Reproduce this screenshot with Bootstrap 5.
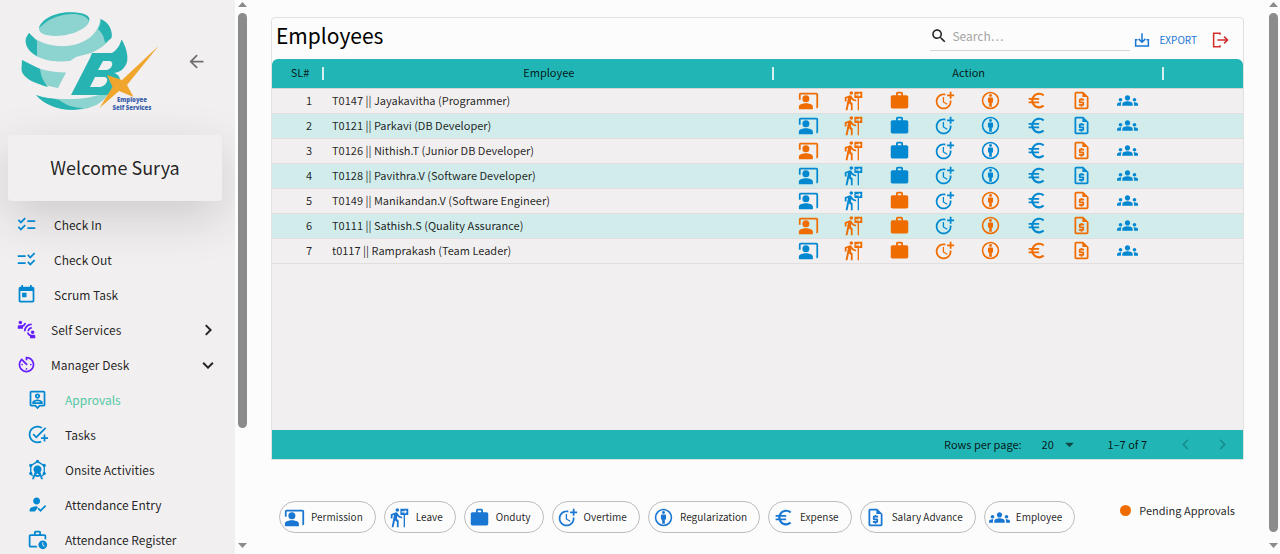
<!DOCTYPE html>
<html lang="en">
<head>
<meta charset="utf-8">
<meta name="viewport" content="width=device-width, initial-scale=1">
<title>Employees – Approvals</title>
<link href="https://cdn.jsdelivr.net/npm/bootstrap@5.3.0/dist/css/bootstrap.min.css" rel="stylesheet">
<style>
  :root { --teal: #22b5b5; --blue: #0288d1; --chip-blue: #1976d2; --orange: #ef6c00; --violet: #651fff; --panel: #f2eff0; }
  body { font-family: "Noto Sans CJK JP", "Noto Sans", sans-serif; font-size: 12px; line-height: 18px; color: rgba(0,0,0,.87); background: #fcfcfc; }
  .ico { width: 21px; height: 21px; fill: currentColor; display: block; flex: none; }
  .ico-sm { width: 18px; height: 18px; }
  .plain { background: none; border: 0; padding: 0; color: inherit; }

  .sidebar { width: 235px; background: var(--panel); overflow: hidden; flex: none; }
  .brand-row { height: 135px; padding: 9px 28px 0 18px; }
  .back { color: #6f6f6f; margin-bottom: 22px; }
  .welcome { margin: 0 13px 6px 8px; height: 66px; padding-bottom: 3px; border-radius: 4px; background: var(--panel); font-size: 18px; }
  .menu a { display: flex; align-items: center; height: 35px; padding: 0 18px 0 16px; color: rgba(0,0,0,.87); text-decoration: none; white-space: nowrap; }
  .menu .ico { color: var(--blue); margin-right: 17px; }
  .menu .group-link .ico { color: var(--violet); margin-right: 14px; }
  .menu .group-link .chev { color: #222; margin: 0 0 0 auto; }
  .menu .sub-link { padding-left: 27px; }
  .menu .current { color: #52c9a5; }

  .scroll-track { width: 14px; padding: 2px 0 6px; background: #fcfcfc; flex: none; color: #8b8b8b; }
  .scroll-track svg { width: 9px; height: 5px; fill: currentColor; display: block; }
  .scroll-thumb { width: 9px; border-radius: 5px; background: #8b8b8b; margin-top: 6px; }
  .thumb-menu { height: 76%; }
  .thumb-page { height: 95%; }

  .content-area { padding: 17px 22px 21px 22px; min-width: 0; }
  .grid-panel { border: 1px solid #e0e0e0; border-radius: 4px 4px 0 0; margin-bottom: 41px; background: #fcfcfc; }
  .grid-head { height: 41px; }
  .grid-title { font-size: 21px; line-height: 34px; margin: 0 0 0 4px; color: #000; }
  .search-box { width: 200px; height: 33px; padding-top: 3px; border-bottom: 1px solid #d4d4d4; margin-right: 3px; }
  .search-box input { border: 0; outline: 0; background: none; font-size: 12px; width: 100%; padding: 0; line-height: 18px; }
  .search-box input::placeholder { color: #a5a5a5; opacity: 1; }
  .export-btn { color: var(--chip-blue); font-size: 10px; margin-top: 13px; }
  .exit-btn { color: #d32f2f; margin: 13px 14px 0 14px; }
  .grid-body { background: var(--panel); border-radius: 6px 6px 0 0; overflow: hidden; }
  .emp-table { width: 100%; table-layout: fixed; border-collapse: collapse; font-size: 11px; }
  .emp-table th { height: 29px; padding: 0 0 2px; text-align: center; font-weight: 400; line-height: 18px;
    background: linear-gradient(#d5eeee,#d5eeee) right center / 2px 13px no-repeat var(--teal); border-bottom: 1px solid #d5d5d5; }
  .emp-table th:first-child { padding-left: 4px; }
  .emp-table th:last-child { background: var(--teal); }
  .emp-table td { height: 25px; padding: 0; border-bottom: 1px solid #e0dedf; line-height: 18px; white-space: nowrap; overflow: hidden; }
  .emp-table tbody tr:nth-child(even) { background: #d1ecea; }
  .emp-table .num { text-align: right; padding: 0 12px 2px 0; }
  .emp-table .who { padding: 0 0 2px 8px; }
  .acts { display: grid; grid-template-columns: repeat(8, 1fr); justify-items: center; padding: 0 14px 0 12px; }
  .ok { color: var(--blue); }
  .pending { color: var(--orange); }
  .grid-foot { height: 29px; background: var(--teal); font-size: 11px; padding: 0 10px 1px 0; }
  .grid-foot select { appearance: none; background: none; border: 0; padding: 0; font-size: 11px; color: inherit; }
  .grid-foot .caret-ico { color: rgba(0,0,0,.6); }
  .page-btn { color: #168f8f; }

  .key-chip { display: flex; align-items: center; height: 32px; border: 1px solid #bdbdbd; border-radius: 16px; padding: 0 12px 0 4px; gap: 6px; font-size: 10px; white-space: nowrap; background: none; color: rgba(0,0,0,.87); }
  .key-chip .ico { color: var(--chip-blue); }
  .dot { width: 11px; height: 11px; border-radius: 50%; background: var(--orange); }
  .pending-key { font-size: 11px; padding-right: 9px; white-space: nowrap; }
</style>
</head>
<body>
<svg class="d-none" aria-hidden="true">
  <symbol id="i-checkin" viewBox="0 0 24 24"><path d="M22 7h-9v2h9V7zm0 8h-9v2h9v-2zM5.54 11 2 7.46l1.41-1.41 2.12 2.12 4.24-4.24 1.41 1.41L5.54 11zm0 8L2 15.46l1.41-1.41 2.12 2.12 4.24-4.24 1.41 1.41L5.54 19z"/></symbol>
  <symbol id="i-checkout" viewBox="0 0 24 24"><path d="M11 7H2v2h9V7zm0 8H2v2h9v-2zm5.34-4-3.54-3.54 1.41-1.41 2.12 2.12 4.24-4.24L22 5.34 16.34 11zm0 8-3.54-3.54 1.41-1.41 2.12 2.12 4.24-4.24L22 13.34 16.34 19z"/></symbol>
  <symbol id="i-today" viewBox="0 0 24 24"><path d="M19 3h-1V1h-2v2H8V1H6v2H5c-1.11 0-1.99.9-1.99 2L3 19c0 1.1.89 2 2 2h14c1.1 0 2-.9 2-2V5c0-1.1-.9-2-2-2zm0 16H5V8h14v11zM7 10h5v5H7z"/></symbol>
  <symbol id="i-connect" viewBox="0 0 24 24"><path d="M11 14H9c0-4.97 4.03-9 9-9v2c-3.87 0-7 3.13-7 7zm7-3V9c-2.76 0-5 2.24-5 5h2c0-1.66 1.34-3 3-3zM7 4c0-1.11-.89-2-2-2s-2 .89-2 2 .89 2 2 2 2-.89 2-2zm4.45.5h-2C9.21 5.92 7.99 7 6.5 7h-3C2.67 7 2 7.67 2 8.5V11h6V8.74c1.86-.59 3.25-2.23 3.45-4.24zM19 17c1.11 0 2-.89 2-2s-.89-2-2-2-2 .89-2 2 .89 2 2 2zm1.5 1h-3c-1.49 0-2.71-1.08-2.95-2.5h-2c.2 2.01 1.59 3.65 3.45 4.24V22h6v-2.5c0-.83-.67-1.5-1.5-1.5z"/></symbol>
  <symbol id="i-timer" viewBox="0 0 24 24"><path d="M11 17c0 .55.45 1 1 1s1-.45 1-1-.45-1-1-1-1 .45-1 1zm0-14v4h2V5.08c3.39.49 6 3.39 6 6.92 0 3.87-3.13 7-7 7s-7-3.13-7-7c0-1.68.59-3.22 1.58-4.42L12 13l1.41-1.41-6.8-6.8v.02C4.42 6.45 3 9.05 3 12c0 4.97 4.02 9 9 9 4.97 0 9-4.03 9-9s-4.03-9-9-9h-1zm7 9c0-.55-.45-1-1-1s-1 .45-1 1 .45 1 1 1 1-.45 1-1zM6 12c0 .55.45 1 1 1s1-.45 1-1-.45-1-1-1-1 .45-1 1z"/></symbol>
  <symbol id="i-approve" viewBox="0 0 24 24"><path d="M19 2H5c-1.11 0-2 .9-2 2v14c0 1.1.89 2 2 2h4l3 3 3-3h4c1.1 0 2-.9 2-2V4c0-1.1-.9-2-2-2zm0 16h-4.83l-.59.59L12 20.17l-1.59-1.59-.58-.58H5V4h14v14zm-7-7c1.65 0 3-1.35 3-3s-1.35-3-3-3-3 1.35-3 3 1.35 3 3 3zm0-4c.55 0 1 .45 1 1s-.45 1-1 1-1-.45-1-1 .45-1 1-1zm6 8.58c0-2.5-3.97-3.58-6-3.58s-6 1.08-6 3.58V17h12v-1.42zM8.48 15c.74-.51 2.23-1 3.52-1s2.78.49 3.52 1H8.48z"/></symbol>
  <symbol id="i-task" viewBox="0 0 24 24"><path d="M22 5.18 10.59 16.6l-4.24-4.24 1.41-1.41 2.83 2.83 10-10L22 5.18zM12 20c-4.41 0-8-3.59-8-8s3.59-8 8-8c1.57 0 3.04.46 4.28 1.25l1.45-1.45C16.1 2.67 14.13 2 12 2 6.48 2 2 6.48 2 12s4.48 10 10 10c1.73 0 3.36-.44 4.78-1.22l-1.5-1.5c-1 .46-2.11.72-3.28.72zm7-5h-3v2h3v3h2v-3h3v-2h-3v-3h-2v3z"/></symbol>
  <symbol id="i-wheel" viewBox="0 0 24 24"><path fill="none" stroke="currentColor" stroke-width="1.5" d="M6.500 19.500 4.300 16.500V7.500L12 3l7.700 4.500v9l-2.200 3"/><circle cx="12" cy="2.700" r="1.800"/><circle cx="4.300" cy="7.300" r="1.800"/><circle cx="19.700" cy="7.300" r="1.800"/><circle cx="4.300" cy="16.500" r="1.800"/><circle cx="19.700" cy="16.500" r="1.800"/><path d="M12 7a4.700 4.700 0 0 1 3.300 8l3 8h-2.200l-1.200-3.200a6 6 0 0 1-5.800 0L7.900 23H5.700l3-8A4.700 4.700 0 0 1 12 7zm0 9.400-1.700 1.900h3.400z"/></symbol>
  <symbol id="i-entry" viewBox="0 0 24 24"><path d="m9 20 3.500-4.500c-.6-.9-1-1.300-1.500-1.500-2.670 0-8 1.340-8 4v2h6zm2-8c2.210 0 4-1.790 4-4s-1.790-4-4-4-4 1.790-4 4 1.790 4 4 4zM15.470 20.500 12 17l1.400-1.410 2.070 2.080 5.130-5.170 1.400 1.410z"/></symbol>
  <symbol id="i-register" viewBox="0 0 24 24"><path d="M4 8h16v3.300c.7.200 1.400.5 2 .9V8c0-1.110-.890-2-2-2h-4V4c0-1.110-.890-2-2-2h-4c-1.110 0-2 .890-2 2v2H4c-1.110 0-2 .890-2 2v11c0 1.110.890 2 2 2h7.700c-.3-.6-.5-1.300-.6-2H4V8zm6-4h4v2h-4V4z"/><path fill-rule="evenodd" d="M18 13a5 5 0 1 0 0 10 5 5 0 0 0 0-10zm1.650 7.350L17.500 18.200V15h1v2.790l1.850 1.850-.7.710z"/></symbol>
  <symbol id="i-permission" viewBox="0 0 24 24"><path d="M21 3H3c-1.100 0-2 .9-2 2v6h2V5h18v16c1.100 0 2-.9 2-2V5c0-1.100-.9-2-2-2z"/><circle cx="9" cy="10" r="4"/><path d="M15.390 16.560C13.710 15.700 11.530 15 9 15s-4.710.7-6.390 1.560C1.610 17.070 1 18.100 1 19.220V22h16v-2.780c0-1.120-.610-2.150-1.610-2.660z"/></symbol>
  <symbol id="i-leave" viewBox="0 0 24 24"><path d="M9.500 5.500c1.100 0 2-.9 2-2s-.9-2-2-2-2 .9-2 2 .9 2 2 2zM5.750 8.900 3 23h2.100l1.750-8L9 17v6h2v-7.550L8.950 13.400l.6-3C10.850 12 12.800 13 15 13v-2c-1.850 0-3.450-1-4.350-2.450l-.95-1.600C9.350 6.350 8.700 6 8 6c-.250 0-.5.050-.750.150L2 8.300V13h2V9.650l1.750-.75M13 2v7h3.750v14h1.500V9H22V2h-9zm5.010 6V6.250H14.500v-1.500h3.510V3l2.490 2.500L18.010 8z"/></symbol>
  <symbol id="i-onduty" viewBox="0 0 24 24"><path d="M20 6h-4V4c0-1.110-.890-2-2-2h-4c-1.110 0-2 .890-2 2v2H4c-1.110 0-1.990.890-1.990 2L2 19c0 1.110.890 2 2 2h16c1.110 0 2-.890 2-2V8c0-1.110-.890-2-2-2zm-6 0h-4V4h4v2z"/></symbol>
  <symbol id="i-overtime" viewBox="0 0 24 24"><path d="M10 8v6l4.700 2.900.8-1.200-4-2.400V8zM17.920 12c.050.330.080.660.080 1 0 3.900-3.100 7-7 7s-7-3.100-7-7 3.100-7 7-7c.7 0 1.370.1 2 .290V4.230c-.640-.150-1.310-.230-2-.230-5 0-9 4-9 9s4 9 9 9 9-4 9-9c0-.340-.020-.670-.060-1h-2.020zM20 5V2h-2v3h-3v2h3v3h2V7h3V5z"/></symbol>
  <symbol id="i-regular" viewBox="0 0 24 24"><circle cx="12" cy="12" r="9.100" fill="none" stroke="currentColor" stroke-width="1.800"/><circle cx="12" cy="6.300" r="1.600"/><path d="M10.300 8.500h3.400c.7 0 1.200.5 1.200 1.200v4.500h-1.400V19h-3v-4.800H9.100V9.700c0-.7.500-1.200 1.200-1.200z"/></symbol>
  <symbol id="i-expense" viewBox="0 0 24 24"><path d="M15 18.500c-2.510 0-4.680-1.420-5.760-3.500H15v-2H8.580c-.050-.330-.080-.660-.080-1s.030-.670.080-1H15V9H9.240C10.320 6.920 12.500 5.500 15 5.500c1.610 0 3.090.590 4.230 1.570L21 5.300C19.410 3.870 17.300 3 15 3c-3.920 0-7.240 2.510-8.480 6H3v2h3.060c-.040.330-.060.660-.060 1s.020.670.060 1H3v2h3.520c1.240 3.490 4.560 6 8.480 6 2.310 0 4.410-.870 6-2.300l-1.780-1.770c-1.130.980-2.600 1.570-4.220 1.570z"/></symbol>
  <symbol id="i-salary" viewBox="0 0 24 24"><path d="M14 2H6c-1.100 0-1.990.9-1.990 2L4 20c0 1.100.890 2 1.990 2H18c1.100 0 2-.9 2-2V8l-6-6zM6 20V4h7v4h5v12H6zm5-1h2v-1h1c.550 0 1-.450 1-1v-3c0-.550-.450-1-1-1h-3v-1h4v-2h-2V9h-2v1h-1c-.550 0-1 .450-1 1v3c0 .550.450 1 1 1h3v1H9v2h2v1z"/></symbol>
  <symbol id="i-employee" viewBox="0 0 24 24"><path d="M12 12.750c1.630 0 3.070.390 4.240.9 1.080.480 1.760 1.560 1.760 2.730V18H6v-1.610c0-1.180.680-2.260 1.760-2.730 1.170-.520 2.610-.910 4.240-.910zM4 13c1.100 0 2-.9 2-2s-.9-2-2-2-2 .9-2 2 .9 2 2 2zm1.130 1.100c-.370-.060-.740-.1-1.130-.1-.990 0-1.930.210-2.780.580C.480 14.900 0 15.620 0 16.430V18h4.500v-1.610c0-.830.230-1.610.630-2.290zM20 13c1.100 0 2-.9 2-2s-.9-2-2-2-2 .9-2 2 .9 2 2 2zm4 3.430c0-.810-.480-1.530-1.220-1.850-.850-.370-1.790-.580-2.780-.580-.390 0-.760.040-1.130.1.400.680.630 1.460.630 2.290V18H24v-1.570zM12 6c1.660 0 3 1.340 3 3s-1.340 3-3 3-3-1.340-3-3 1.340-3 3-3z"/></symbol>
  <symbol id="i-search" viewBox="0 0 24 24"><path d="M15.500 14h-.790l-.280-.270C15.410 12.590 16 11.110 16 9.500 16 5.910 13.090 3 9.500 3S3 5.910 3 9.500 5.910 16 9.500 16c1.610 0 3.090-.590 4.230-1.570l.270.280v.790l5 4.990L20.490 19l-4.990-5zm-6 0C7.010 14 5 11.990 5 9.500S7.010 5 9.500 5 14 7.010 14 9.500 11.990 14 9.500 14z"/></symbol>
  <symbol id="i-back" viewBox="0 0 24 24"><path d="M20 11H7.830l5.590-5.590L12 4l-8 8 8 8 1.410-1.410L7.830 13H20v-2z"/></symbol>
  <symbol id="i-right" viewBox="0 0 24 24"><path d="M10 6 8.590 7.410 13.170 12l-4.580 4.590L10 18l6-6z"/></symbol>
  <symbol id="i-left" viewBox="0 0 24 24"><path d="M15.410 7.410 14 6l-6 6 6 6 1.410-1.410L10.830 12z"/></symbol>
  <symbol id="i-open" viewBox="0 0 24 24"><path fill="none" stroke="currentColor" stroke-width="2.600" d="m9 5.500 6.500 6.500L9 18.500"/></symbol>
  <symbol id="i-down" viewBox="0 0 24 24"><path fill="none" stroke="currentColor" stroke-width="2.600" d="m5.500 9 6.500 6.500L18.500 9"/></symbol>
  <symbol id="i-caret" viewBox="0 0 24 24"><path d="m7 10 5 5 5-5z"/></symbol>
  <symbol id="i-save" viewBox="0 0 24 24"><path fill="none" stroke="currentColor" stroke-width="2" d="M6 11.500H3.500V20h17v-8.500H18M12 3v12M7.500 10.500 12 15l4.500-4.500"/></symbol>
  <symbol id="i-exit" viewBox="0 0 24 24"><path fill="none" stroke="currentColor" stroke-width="2.100" d="M12 5V3H3.500v18H12v-2M8.500 12H21M17.500 7.500 22 12l-4.500 4.500"/></symbol>
</svg>

<div class="d-flex vh-100 overflow-hidden">
  <aside class="sidebar">
    <div class="brand-row d-flex justify-content-between align-items-center">
      <svg class="align-self-start" width="142" height="106" viewBox="18 9 142 106" role="img" aria-label="TBX Employee Self Services">
        <g fill="#8dd3cf">
          <path d="M39 28C41 20 53 13 67 12.500C81 12 90 15 89.500 20C89 27 76 34 62 35.500C48 37 38 34 39 28Z"/>
          <path d="M29 33C36 42 51 47 67 46C85 44 98 35 100.500 19C108 22 112 29 111.500 37C107 44 100 49 91 53L76 57L70 61C52 63 33 59 27 47C25 42 26 37 29 33Z"/>
          <path d="M22 60C33 68 47 72 66 72.500L58 88C42 85 27 80 22 70Z"/>
          <path d="M36 95C47 99 57 99 73 99C88 99 99 94 108 94C104 102 93 109 76 110C60 111 45 105 36 95Z"/>
        </g>
        <g fill="#26b3b1">
          <path d="M39 28C42 19 55 12.500 70 12.300C84 12 91 16 89 21C86 13 69 12 56 17C47 20 43 25 39 28Z"/>
          <path d="M29 33L37 41L37 56C29 52 24 44 26 38Z"/>
          <path d="M100.500 19C109 22 113 31 111.500 38L105 43C104 36 102 33 98 29C100 26 101 23 100.500 19Z"/>
          <path d="M22 60L40 69C41 76 43 81 48 87C34 83 22 78 21.500 69Z"/>
          <path d="M36 95C46 99 54 98 59 100C66 105 73 108 84 108C67 113 46 107 36 95Z"/>
        </g>
        <path fill="#26b3b1" fill-rule="evenodd" d="M92 53H112C117 50 120 45 121.500 39.500C126 46 128.500 56 127 62C125 68 121 72 114 73C120 75 121 79 119 85C117 91 112 95 105 95H71L90 58ZM103 61L98 70H106C112 70 115 61 109 61ZM95 77L90 87H99C107 87 110 77 104 77Z"/>
        <path fill="#f0a62c" d="M158.500 46L127 85L133.500 97L119 91L99.500 108L112.500 87L107 75L122 80Z"/>
        <text x="132" y="102" text-anchor="middle" font-family="Open Sans" font-size="6" font-weight="800" fill="#3b62ad">Employee</text>
        <text x="132" y="110" text-anchor="middle" font-family="Open Sans" font-size="6" font-weight="800" fill="#3b62ad">Self Services</text>
      </svg>
      <button type="button" class="plain back" aria-label="Collapse menu"><svg class="ico"><use href="#i-back"/></svg></button>
    </div>
    <div class="welcome shadow-lg d-flex align-items-center justify-content-center">Welcome Surya</div>
    <nav class="menu position-relative" aria-label="Main">
      <a href="#"><svg class="ico"><use href="#i-checkin"/></svg>Check In</a>
      <a href="#"><svg class="ico"><use href="#i-checkout"/></svg>Check Out</a>
      <a href="#"><svg class="ico"><use href="#i-today"/></svg>Scrum Task</a>
      <a href="#" class="group-link"><svg class="ico"><use href="#i-connect"/></svg>Self Services<svg class="ico ico-sm chev"><use href="#i-open"/></svg></a>
      <a href="#" class="group-link"><svg class="ico"><use href="#i-timer"/></svg>Manager Desk<svg class="ico ico-sm chev"><use href="#i-down"/></svg></a>
      <a href="#" class="sub-link current"><svg class="ico"><use href="#i-approve"/></svg>Approvals</a>
      <a href="#" class="sub-link"><svg class="ico"><use href="#i-task"/></svg>Tasks</a>
      <a href="#" class="sub-link"><svg class="ico"><use href="#i-wheel"/></svg>Onsite Activities</a>
      <a href="#" class="sub-link"><svg class="ico"><use href="#i-entry"/></svg>Attendance Entry</a>
      <a href="#" class="sub-link"><svg class="ico"><use href="#i-register"/></svg>Attendance Register</a>
    </nav>
  </aside>
  <div class="scroll-track d-flex flex-column align-items-center" aria-hidden="true">
    <svg viewBox="0 0 9 5"><path d="M0 5 4.500 0 9 5z"/></svg>
    <div class="scroll-thumb thumb-menu"></div>
    <svg viewBox="0 0 9 5" class="mt-auto"><path d="M0 0h9L4.500 5z"/></svg>
  </div>

  <main class="content-area flex-grow-1 d-flex flex-column">
    <section class="grid-panel flex-grow-1 d-flex flex-column">
      <header class="grid-head d-flex align-items-start">
        <h1 class="grid-title fw-normal me-auto">Employees</h1>
        <label class="search-box d-flex align-items-center gap-1">
          <svg class="ico ico-sm"><use href="#i-search"/></svg>
          <input type="search" placeholder="Search…" aria-label="Search">
        </label>
        <button type="button" class="plain export-btn d-flex align-items-center gap-2"><svg class="ico ico-sm"><use href="#i-save"/></svg>EXPORT</button>
        <button type="button" class="plain exit-btn" aria-label="Exit"><svg class="ico ico-sm"><use href="#i-exit"/></svg></button>
      </header>
      <div class="grid-body flex-grow-1">
        <table class="emp-table">
          <colgroup><col style="width:52px"><col style="width:46.3%"><col style="width:40.2%"><col></colgroup>
          <thead><tr><th scope="col">SL#</th><th scope="col">Employee</th><th scope="col">Action</th><th aria-label="More"></th></tr></thead>
          <tbody id="rows"></tbody>
        </table>
      </div>
      <footer class="grid-foot d-flex align-items-center justify-content-end">
        <label for="per-page" class="me-3">Rows per page:</label>
        <span class="d-flex align-items-center ms-1">
          <select id="per-page"><option>20</option><option>50</option></select>
          <svg class="ico caret-ico ms-1"><use href="#i-caret"/></svg>
        </span>
        <span class="mx-4 px-1">1–7 of 7</span>
        <button type="button" class="plain page-btn me-3" aria-label="Previous page" disabled><svg class="ico"><use href="#i-left"/></svg></button>
        <button type="button" class="plain page-btn" aria-label="Next page" disabled><svg class="ico"><use href="#i-right"/></svg></button>
      </footer>
    </section>
    <div class="d-flex align-items-start justify-content-between">
      <div class="d-flex gap-2 ms-2" id="keys"></div>
      <div class="pending-key d-flex align-items-center gap-2"><span class="dot"></span>Pending Approvals</div>
    </div>
  </main>
  <div class="scroll-track d-flex flex-column align-items-center" aria-hidden="true">
    <svg viewBox="0 0 9 5"><path d="M0 5 4.500 0 9 5z"/></svg>
    <div class="scroll-thumb thumb-page"></div>
    <svg viewBox="0 0 9 5" class="mt-auto"><path d="M0 0h9L4.500 5z"/></svg>
  </div>
</div>

<script src="https://cdn.jsdelivr.net/npm/bootstrap@5.3.0/dist/js/bootstrap.bundle.min.js"></script>
<script>
  const kinds = [['permission','Permission'],['leave','Leave'],['onduty','Onduty'],['overtime','Overtime'],
    ['regular','Regularization'],['expense','Expense'],['salary','Salary Advance'],['employee','Employee']];
  // One flag per action: 1 = something is waiting for approval
  const people = [
    ['T0147 || Jayakavitha (Programmer)', '11111110'],
    ['T0121 || Parkavi (DB Developer)', '01000000'],
    ['T0126 || Nithish.T (Junior DB Developer)', '11000010'],
    ['T0128 || Pavithra.V (Software Developer)', '00000000'],
    ['T0149 || Manikandan.V (Software Engineer)', '00101010'],
    ['T0111 || Sathish.S (Quality Assurance)', '11101010'],
    ['t0117 || Ramprakash (Team Leader)', '01111110']
  ];
  const icon = id => `<svg class="ico"><use href="#i-${id}"/></svg>`;
  document.getElementById('rows').innerHTML = people.map(([name, flags], i) =>
    `<tr><td class="num">${i + 1}</td><td class="who">${name}</td><td><div class="acts">` +
    kinds.map(([id, label], k) => `<button type="button" class="plain ${flags[k] === '1' ? 'pending' : 'ok'}" aria-label="${label}">${icon(id)}</button>`).join('') +
    `</div></td><td></td></tr>`).join('');
  document.getElementById('keys').innerHTML = kinds.map(([id, label]) =>
    `<button type="button" class="key-chip">${icon(id)}${label}</button>`).join('');
</script>
</body>
</html>
